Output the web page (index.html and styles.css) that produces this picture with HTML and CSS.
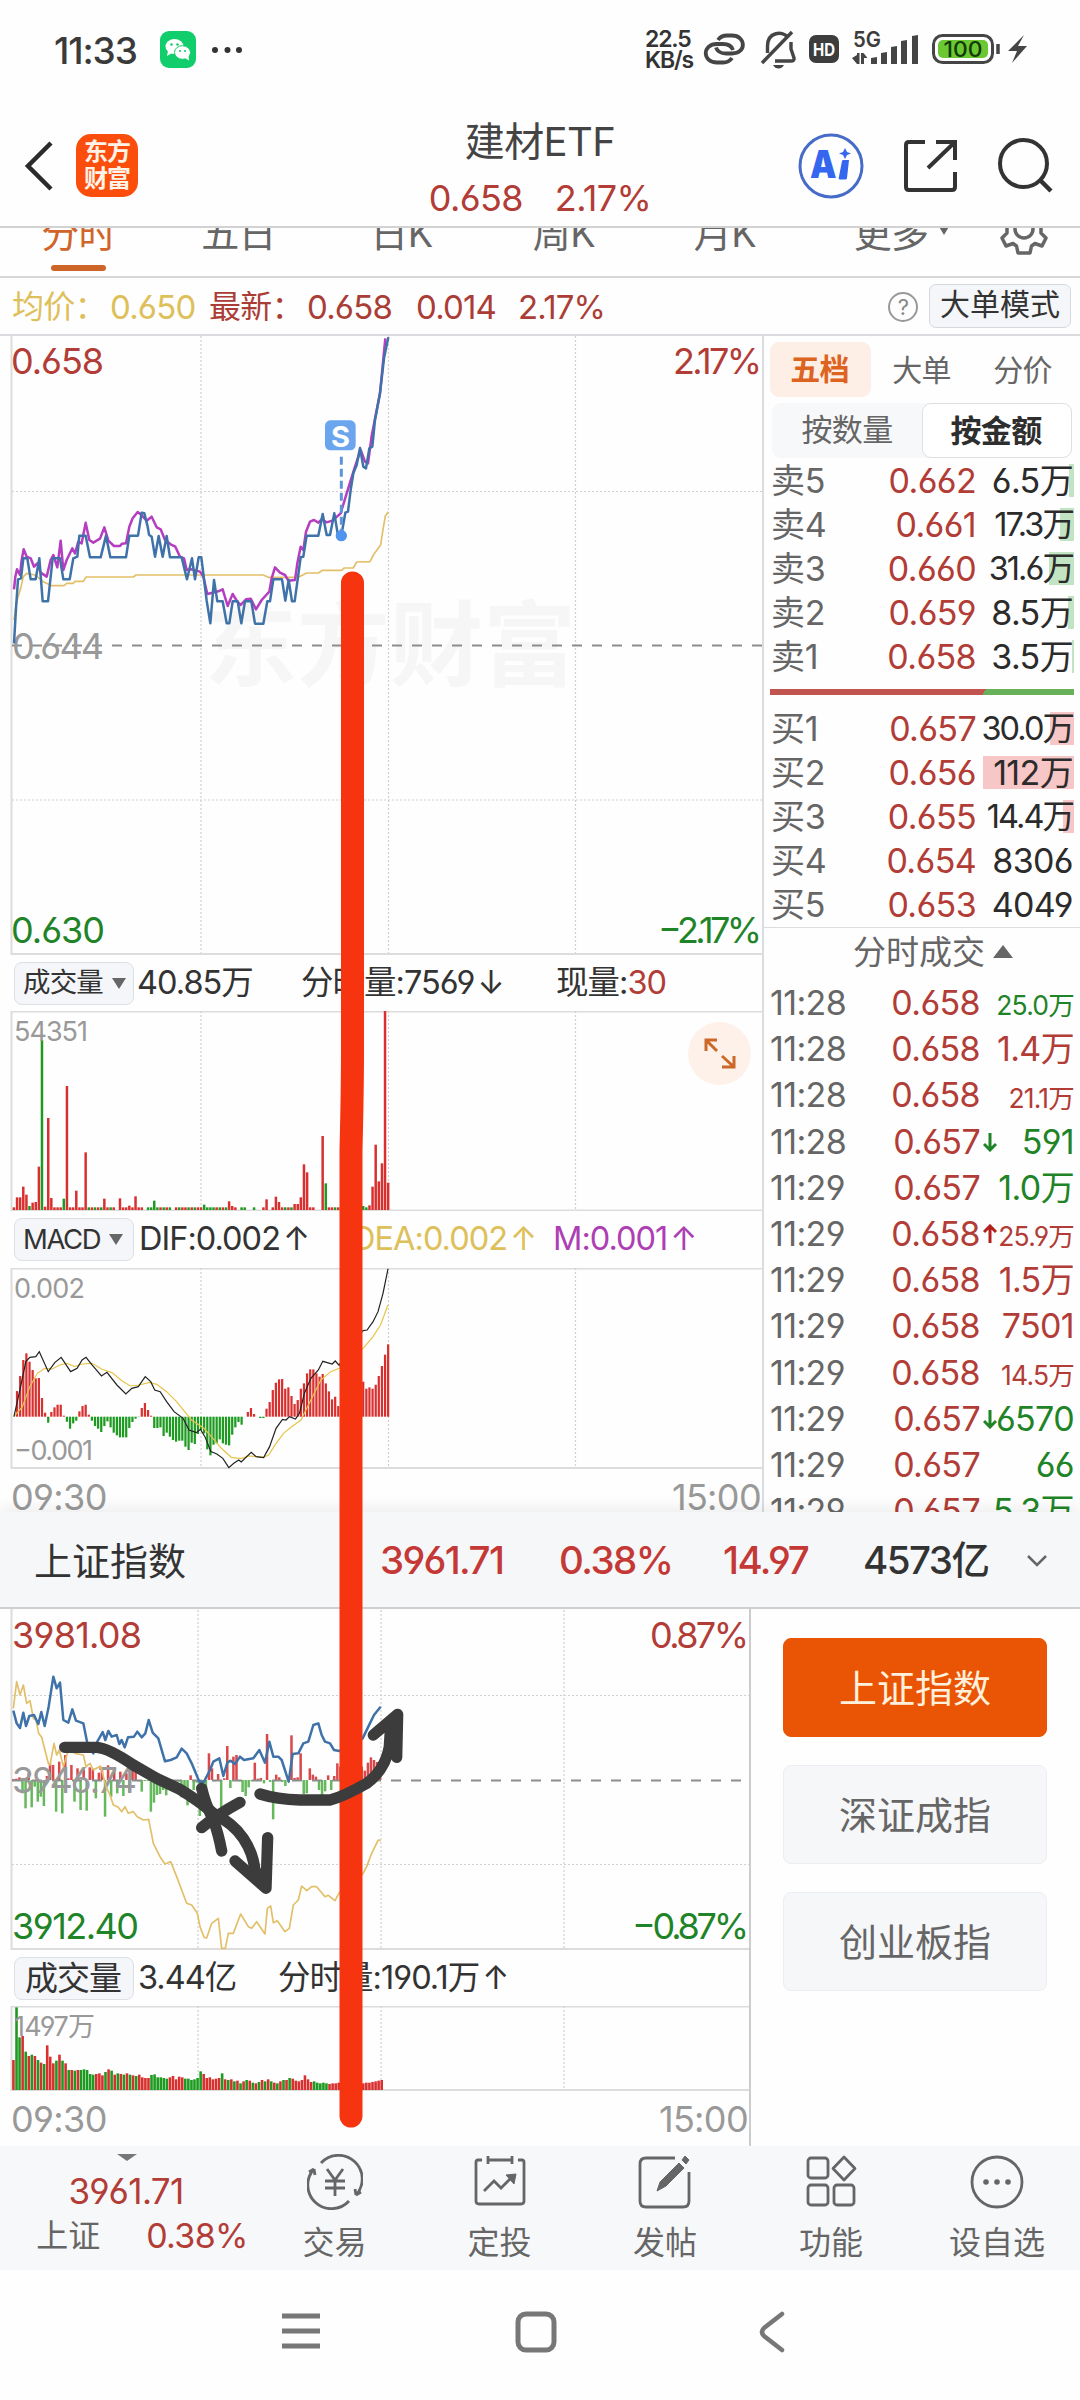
FILE: index.html
```html
<!DOCTYPE html>
<html lang="zh-CN">
<head>
<meta charset="utf-8">
<title>建材ETF</title>
<link rel="stylesheet" href="styles.css">
</head>
<body>
<div class="app">
  <header class="status">
    <span class="clock">11:33</span>
    <svg class="wechat" width="36" height="37" viewBox="0 0 36 37"><rect width="36" height="37" rx="9" fill="#12cd6b"/><ellipse cx="14.500" cy="15.500" rx="9" ry="7.500" fill="#fff"/><path d="M8 20l-1 5 5-3z" fill="#fff"/><ellipse cx="22.500" cy="21.500" rx="8" ry="6.800" fill="#fff" stroke="#12cd6b"/><path d="M25 27l4 2.500-.5-5z" fill="#fff"/><g fill="#12cd6b"><circle cx="11.500" cy="13.500" r="1.300"/><circle cx="17.500" cy="13.500" r="1.300"/><circle cx="20" cy="20" r="1.100"/><circle cx="25" cy="20" r="1.100"/></g></svg>
    <svg class="dots" width="32" height="8" viewBox="0 0 32 8" fill="#333"><circle cx="4" cy="4" r="3"/><circle cx="16.500" cy="4" r="3"/><circle cx="28" cy="4" r="3"/></svg>
    <span class="speed">22.5<br>KB/s</span>
    <svg class="sys" width="380" height="42" viewBox="700 28 380 42" fill="none" stroke="#454545" stroke-width="3.800">
      <path d="M718 40q3-4.500 9-4.500h5c14 0 15 18 0 18h-6q-8 0-10-6M732 58q-3 4.500-9 4.500h-6c-15 0-15-18.500 0-18.500h6q8 0 10 6"/>
      <path d="M767.500 53V46c0-14 15-16 21-8M791 42V49l3 9q.5 3-3 3H775M762 63l30-31" stroke-width="3.400"/><path d="M773 65h11q-2 3.500-5.500 3.500T773 65z" fill="#454545" stroke="none"/>
      <rect x="809" y="35" width="30" height="28" rx="7" fill="#3d3d3d" stroke="none"/>
      <g fill="#454545" stroke="none"><path d="M871 58l6-1v7h-6zM881 53l6-1v12h-6zM891 47l6-1v18h-6zM901 41l6-1v24h-6zM912 36l6-1v29h-6zM852 58l5-3v-2h2.500v11h-2.500zM861 64v-11h2.500l4 5h-3.500v6z"/></g>
      <rect x="933.500" y="35.500" width="59" height="27" rx="9" stroke-width="3"/><rect x="938" y="40" width="50" height="18" rx="5" fill="#6cc832" stroke="none"/><path d="M998 44v10" stroke-width="3.500"/>
      <path d="M1024 35l-16 16h9l-5 12 15-17h-9z" fill="#454545" stroke="none"/>
      <text x="824" y="55.500" class="hd" text-anchor="middle" textLength="22" lengthAdjust="spacingAndGlyphs">HD</text>
      <text x="853" y="47" class="fiveg" textLength="28" lengthAdjust="spacingAndGlyphs">5G</text>
      <text x="963" y="57" class="batt" text-anchor="middle" textLength="39" lengthAdjust="spacingAndGlyphs">100</text>
    </svg>
  </header>

  <div class="head">
    <svg class="back" width="30" height="52" viewBox="0 0 30 52"><path d="M27 3L4 26l23 23" fill="none" stroke="#2b2b2b" stroke-width="4.500"/></svg>
    <div class="logo">东方<br>财富</div>
    <div class="title"><b>建材ETF</b><div class="quote"><span>0.658</span><span>2.17%</span></div></div>
    <svg class="tools" width="256" height="68" viewBox="797 132 256 68" fill="none">
      <circle cx="831" cy="166" r="31" stroke="#466bc8" stroke-width="3"/>
      <g fill="#3566f0"><text x="810" y="178" class="ai" textLength="26" lengthAdjust="spacingAndGlyphs">A</text><path d="M842 161q0-1 1.500-1h5.500l-2 18q0 1.500-2 1.500h-5q-1.500 0-1.300-1.500zM845 148l2 4 4 1.500-4 1.500-2 4-2-4-4-1.500 4-1.500z"/></g>
      <path d="M925 142h-16q-3 0-3 3v42q0 3 3 3h43q3 0 3-3v-15M936 142h19v18M955 142l-27 26" stroke="#333" stroke-width="4"/>
      <circle cx="1023.500" cy="163.500" r="23.500" stroke="#333" stroke-width="4"/><path d="M1040 180l11 11" stroke="#333" stroke-width="4.500"/>
    </svg>
  </div>

  <nav class="tabs">
    <span class="on">分时</span><span>五日</span><span>日K</span><span>周K</span><span>月K</span><span>更多<i></i></span>
    <svg width="50" height="30" viewBox="-25 -1 50 30" fill="none" stroke="#666" stroke-width="3.500"><path d="M-6 24H6L7.500 17 11 14.500 18 17 22 9 17 4V-4L22-9H-22L-17-4V4L-22 9-18 17-11 14.500-7.500 17z" stroke-linejoin="round"/><circle r="9"/></svg>
  </nav>

  <div class="info">
    <span class="avg">均价：</span><span class="avg n">0.650</span><span class="up">最新：</span><span class="up n">0.658</span><span class="up n">0.014</span><span class="up n">2.17%</span>
    <i class="q">?</i><button>大单模式</button>
  </div>

  <main class="main">
    <section class="charts">
      <svg class="plot" width="763" height="619" viewBox="0 336 763 619">
        <text x="204" y="679" class="mark" textLength="372">东方财富</text>
        <path class="grid" d="M201 336V953M388.500 336V953M575.500 336V953M12 491.500H763M12 800H763"/>
        <path class="axis" d="M11.500 336V954H763" />
        <path class="mid" d="M12 645.500H763"/>
        <text x="12" y="659" class="ax gray" textLength="92">0.644</text>
        <g transform="translate(0 330) scale(.33333)" class="ln">
          <polyline class="yel" points="42,870 50,815 62,775 70,740 80,730 105,735 130,755 155,767 192,767 200,760 220,760 225,754 250,754 258,741 400,741 408,735 790,735 805,742 895,742 920,729 955,729 968,721 1025,721 1033,714 1060,714 1070,696 1110,695 1122,672 1142,645 1148,605 1156,558 1165,545"/>
          <polyline class="pur" points="42,778 46,740 51,718 60,735 65,690 71,658 80,680 92,685 102,710 112,700 122,728 140,740 152,690 160,675 172,712 182,632 190,720 200,690 217,655 225,670 235,635 245,640 257,578 268,630 280,638 300,626 313,592 325,632 342,648 360,648 366,641 378,640 388,590 398,565 413,546 425,556 440,572 455,560 470,592 482,598 495,630 512,643 526,650 540,680 552,685 560,720 575,718 600,725 610,740 622,792 655,784 668,778 683,828 698,792 712,815 722,825 738,808 752,806 768,838 785,810 808,785 815,745 825,712 840,728 855,735 865,752 885,750 892,700 902,650 910,660 918,605 930,575 942,570 955,578 965,568 980,577 997,572 1022,550 1040,490 1065,410 1082,360 1095,395 1104,400 1115,318 1140,190 1156,25"/>
          <polyline class="blu" points="42,940 48,835 54,748 63,745 70,685 82,685 92,748 107,748 118,685 128,814 144,814 158,685 180,685 190,748 209,748 220,685 232,680 238,617 257,617 270,682 302,682 318,617 331,682 378,682 388,617 414,617 425,548 433,550 443,590 447,614 455,620 465,680 476,618 488,680 500,618 510,682 545,682 561,748 576,685 585,748 596,682 604,682 620,812 631,880 642,750 652,814 668,814 680,880 688,880 698,814 713,814 724,880 735,814 754,814 765,881 790,881 802,814 810,814 820,748 846,748 856,812 866,750 876,814 884,814 902,682 910,680 920,617 955,617 968,552 980,615 990,615 1003,550 1014,617 1024,617 1036,548 1044,545 1052,480 1060,430 1070,405 1080,354 1090,410 1098,415 1108,355 1117,350 1125,270 1140,190 1152,85 1165,22"/>
          <path d="M1024 380V610" stroke="#5d95d8" stroke-width="9" stroke-dasharray="24 12"/>
          <circle cx="1024" cy="617" r="17" fill="#4f94ef"/><rect x="975" y="271" width="92" height="90" rx="16" fill="#6aa5ee"/>
        </g>
        <text x="340.500" y="447" class="sell" text-anchor="middle">S</text>
        <text x="11" y="374" class="ax red" textLength="93">0.658</text><text x="762" y="374" class="ax red end" textLength="89">2.17%</text>
        <text x="11" y="943" class="ax green" textLength="94">0.630</text><text x="762" y="943" class="ax green end" textLength="104">−2.17%</text>
      </svg>
      <div class="ind i1"><span class="pick">成交量<i></i></span><span>40.85万</span><span>分时量:7569<em>↓</em></span><span>现量:<b>30</b></span></div>
      <svg class="plot" width="763" height="200" viewBox="0 1011 763 200">
        <path class="axis" d="M763 1011.500H11.500V1210.500H763"/><path class="grid" d="M201 1011V1210M388.500 1011V1210M575.500 1011V1210"/>
        <g id="vol" transform="translate(0 1210) scale(.4974 .3333)"></g>
        <text x="14" y="1041" class="sm gray" textLength="74">54351</text>
        <circle cx="719.500" cy="1053.500" r="31.500" fill="#fdf1e9"/>
        <path d="M706 1051V1040H717M706 1040L717 1051M734 1056V1067H722M734 1067L722 1056" fill="none" stroke="#cc6828" stroke-width="3"/>
      </svg>
      <div class="ind i2"><span class="pick">MACD<i></i></span><span>DIF:0.002<em>↑</em></span><span class="avg">DEA:0.002<em>↑</em></span><span class="m">M:0.001<em>↑</em></span></div>
      <svg class="plot" width="763" height="201" viewBox="0 1268 763 201">
        <path class="axis" d="M763 1268.500H11.500V1468H763"/><path class="grid" d="M201 1268V1468M388.500 1268V1468M575.500 1268V1468"/>
        <g id="macd" transform="translate(0 1416.700) scale(.4974 .3333)"></g>
        <text x="14" y="1298" class="sm gray" textLength="71">0.002</text><text x="14" y="1460" class="sm gray" textLength="79">−0.001</text>
        <g transform="translate(0 1220) scale(.4974 .3333)" class="thin">
          <polyline stroke="#e6c548" points="28,590 45,560 60,500 75,460 90,445 105,447 120,435 135,430 150,440 165,432 185,430 205,448 225,458 245,482 262,498 280,495 300,487 315,493 335,515 355,545 385,600 410,625 425,650 445,685 465,712 485,716 500,708 530,712 540,705 555,670 570,640 585,622 605,600 625,540 645,480 665,455 682,445 705,415 730,385 750,350 765,315 780,255"/>
          <polyline stroke="#222" points="28,590 40,510 52,425 60,412 72,410 79,395 97,455 110,428 123,412 142,455 155,445 165,420 173,412 185,435 204,468 215,457 235,495 253,522 265,505 278,500 292,470 303,485 311,510 322,515 335,545 350,575 368,595 380,630 395,638 403,628 412,650 424,695 436,702 448,715 460,743 470,730 480,720 485,726 505,697 515,710 530,713 542,680 555,625 568,598 575,600 582,590 594,597 602,580 612,520 625,475 640,450 649,424 668,432 674,423 682,436 700,380 730,332 738,330 750,305 760,275 770,220 780,147"/>
        </g>
      </svg>
      <div class="time"><span>09:30</span><span>15:00</span></div>
    </section>

    <aside class="book">
      <div class="modes"><b>五档</b><span>大单</span><span>分价</span></div>
      <div class="toggle"><span>按数量</span><b>按金额</b></div>
      <div class="rows" id="sell"></div>
      <div class="ratio"></div>
      <div class="rows" id="buy"></div>
      <h3>分时成交<i></i></h3>
      <div class="trades" id="trades"></div>
    </aside>
  </main>

  <div class="indexbar"><span>上证指数</span><b>3961.71</b><b>0.38%</b><b>14.97</b><b class="dark">4573亿</b><svg width="22" height="14" viewBox="0 0 22 14"><path d="M2 2l9 9 9-9" fill="none" stroke="#666" stroke-width="2.500"/></svg></div>

  <section class="lower">
    <div class="idx">
      <svg class="plot" width="750" height="341" viewBox="0 1609 750 341">
        <path class="grid" d="M198 1610V1949M381 1610V1949M564 1610V1949M12 1695.500H750M12 1864.500H750"/>
        <path class="axis" d="M11.500 1609V1949H750"/>
        <g id="flow" transform="translate(0 1780) scale(.33333)"></g>
        <path class="mid" d="M391 1780.500H745"/><path class="mid" d="M12 1780.500H381" />
        <text x="12" y="1793" class="ax gray" textLength="125">3946.74</text>
        <g transform="translate(0 1600) scale(.33333)" class="ln">
          <polyline class="yel" points="40,325 50,245 60,285 70,255 80,310 90,302 100,355 108,360 116,400 125,412 145,490 150,495 162,430 170,465 178,450 190,500 205,450 225,460 250,465 258,500 270,490 280,510 302,498 318,560 330,585 340,615 355,622 365,635 375,620 385,640 400,635 412,650 430,660 446,658 460,730 480,770 495,792 512,785 530,830 560,910 575,915 592,940 600,980 612,1012 620,1014 635,970 655,955 665,1045 676,1045 685,1000 700,1000 722,942 745,980 755,985 770,965 795,1002 802,925 812,918 820,968 832,962 855,995 868,985 880,915 895,900 905,858 920,872 935,860 950,860 975,890 985,886 1005,902 1018,878 1050,860 1088,822 1100,800 1115,760 1135,720 1142,722"/>
          <polyline class="blu" points="40,332 50,370 60,384 70,338 78,378 88,348 102,345 115,372 124,336 134,378 146,320 160,230 170,265 180,248 190,360 205,368 217,328 228,362 250,370 262,430 280,460 292,425 308,396 316,420 325,393 335,410 350,405 358,432 365,420 374,442 384,412 402,410 412,395 425,412 436,400 446,360 458,398 475,415 495,484 512,480 530,472 545,446 560,460 575,490 598,545 612,545 630,510 640,485 658,475 670,528 682,488 692,482 705,492 720,470 732,480 760,475 778,450 795,488 808,425 820,470 835,470 845,480 866,545 878,462 895,460 910,430 925,425 940,375 955,370 965,405 975,425 990,430 1002,450 1018,453 1050,440 1088,415 1105,380 1122,345 1142,320"/>
        </g>
        <text x="12" y="1648" class="ax red" textLength="130">3981.08</text><text x="749" y="1648" class="ax red end" textLength="99">0.87%</text>
        <text x="12" y="1939" class="ax green" textLength="127">3912.40</text><text x="749" y="1939" class="ax green end" textLength="117">−0.87%</text>
      </svg>
      <div class="ind i3"><span class="pick">成交量</span><span>3.44亿</span><span>分时量:190.1万<em>↑</em></span></div>
      <svg class="plot" width="750" height="85" viewBox="0 2006 750 85">
        <path class="axis" d="M750 2006.500H11.500V2090H750"/><path class="grid" d="M198 2006V2090M381 2006V2090M564 2006V2090"/>
        <g id="ivol" transform="translate(0 2090) scale(.4974 .3333)"></g>
        <text x="14" y="2036" class="sm gray" textLength="81">1497万</text>
      </svg>
      <div class="time"><span>09:30</span><span>15:00</span></div>
    </div>
    <div class="picks"><button class="on">上证指数</button><button>深证成指</button><button>创业板指</button></div>
  </section>

  <footer class="bar">
    <div class="mini"><i></i><b>3961.71</b><div><span>上证</span><b>0.38%</b></div></div>
    <div class="act"><svg viewBox="0 0 56 56"><path d="M14 9a23.500 23.500 0 0 1 35 32M49 41l5-3M49 41l-1-6M42 47a23.500 23.500 0 0 1-35-32M7 15l-5 3M7 15l1 6"/><path d="M20 15l8 11 8-11M18 27h20M18 34h20M28 26v16"/></svg>交易</div>
    <div class="act"><svg viewBox="0 0 56 56"><path d="M10 6H6q-2 0-2 2v39q0 3 3 3h42q3 0 3-3V8q0-2-2-2h-4M16 6h24M16 2v8M40 2v8M12 37l10-10 7 7 11-11"/><path d="M34 21l10-1-2 10z" fill="#666" stroke-width="1"/></svg>定投</div>
    <div class="act"><svg viewBox="0 0 56 56"><path d="M38 4H9q-6 0-6 6v37q0 6 6 6h37q6 0 6-6V18"/><path d="M20 37l3-9L42 9l5 5-18 18zM45 6l3-4 4 4-3 4z" fill="#666" stroke-width="1"/></svg>发帖</div>
    <div class="act"><svg viewBox="0 0 56 56"><rect x="5" y="4" width="20" height="20" rx="3"/><rect x="5" y="31" width="20" height="20" rx="3"/><rect x="31" y="31" width="20" height="20" rx="3"/><path d="M41 3l11 11.500L41 26 30 14.500z" stroke-linejoin="round"/></svg>功能</div>
    <div class="act"><svg viewBox="0 0 56 56"><circle cx="28" cy="28" r="25"/><g fill="#666" stroke="none"><circle cx="17" cy="28" r="2.800"/><circle cx="28" cy="28" r="2.800"/><circle cx="39" cy="28" r="2.800"/></g></svg>设自选</div>
  </footer>
  <div class="sysnav">
    <svg width="40" height="40" viewBox="0 0 40 40" stroke="#777" stroke-width="5"><path d="M1 5h38M1 20h38M1 35h38"/></svg>
    <svg width="42" height="42" viewBox="0 0 42 42" fill="none" stroke="#777" stroke-width="5"><rect x="3" y="3" width="36" height="36" rx="8"/></svg>
    <svg width="28" height="42" viewBox="0 0 28 42" fill="none" stroke="#777" stroke-width="4.500" stroke-linecap="round"><path d="M24 3L6 17q-4 4 0 8l18 14"/></svg>
  </div>

  <svg class="ink" width="1080" height="2400" viewBox="0 0 1080 2400" fill="none" stroke-linecap="round" stroke-linejoin="round">
    <path d="M352.500 583V1050Q352.500 1090 351 1150V2116" stroke="#f63410" stroke-width="23"/>
    <g transform="translate(0 1600) scale(.33333)" stroke="#3c3c3c" stroke-width="34">
      <path d="M194 442L290 442Q325 444 400 495L470 535 540 568Q600 605 640 640 700 670 730 715 760 760 765 812"/>
      <path d="M705 783L798 865 803 713M765 812L798 850M605 565Q615 610 640 660 655 700 665 753M605 683Q650 645 720 607"/>
      <path d="M780 582Q830 598 900 600L990 600Q1030 590 1100 550 1155 510 1168 440L1172 375M1120 405L1193 343 1190 472"/>
    </g>
  </svg>
</div>
<script src="app.js"></script>
</body>
</html>
```
FILE: styles.css
```css
* { box-sizing: border-box; }
body { margin: 0; background: #fff; }
body, button { font-family: Inter, "Noto Sans CJK SC", sans-serif; font-feature-settings: "cv03", "cv04"; }
.app { position: relative; width: 1080px; height: 2400px; overflow: hidden; background: #fefefe; color: #333; white-space: nowrap; letter-spacing: -.04em; line-height: 1; }
.app svg { display: block; flex: none; }
i, em { font-style: normal; }

.status { height: 100px; display: flex; align-items: center; padding-left: 54px; }
.clock { width: 106px; flex: none; font-size: 37px; font-weight: 500; color: #3a3a3a; letter-spacing: -.03em; }
.dots { margin-left: 15px; }
.wechat { margin-top: -2px; }
.speed { margin-left: 402px; width: 55px; flex: none; font-size: 23px; font-weight: 600; line-height: 21px; letter-spacing: -.05em; }
.sys { margin-top: -2px; }
.sys text { stroke: none; letter-spacing: 0; }
.hd { font-size: 18px; font-weight: 700; fill: #fff; }
.fiveg { font-size: 22px; font-weight: 600; fill: #3d3d3d; }
.batt { font-size: 22px; font-weight: 500; fill: #123a08; }

.head { height: 128px; border-bottom: 2px solid #d2d2d2; display: flex; align-items: center; padding: 5px 27px 0 24px; }
.logo { margin-left: 22px; width: 62px; height: 63px; border-radius: 15px; background: #fb4d0b; color: #fff3e8; font-size: 24px; font-weight: 700; line-height: 27px; text-align: center; padding-top: 4px; letter-spacing: -1px; }
.title { flex: 1; text-align: center; padding-left: 145px; color: #444; }
.title b { display: block; font-weight: 400; font-size: 40px; line-height: 56px; margin-top: 8px; }
.quote { display: flex; justify-content: center; gap: 32px; color: #b23c36; font-size: 36px; line-height: 56px; }
.ai { font-size: 38px; font-weight: 900; }

.tabs { height: 50px; border-bottom: 2px solid #d6d6d6; overflow: hidden; display: grid; grid-template-columns: 157px 163px 163px 162px 160px 194px 60px; font-size: 38px; color: #666; }
.tabs span { height: 48px; line-height: 48px; margin-top: -19px; text-align: center; }
.tabs .on { color: #d0642a; height: 67px; }
.tabs .on::after { content: ""; display: block; width: 55px; height: 6px; margin: 8px auto 0; border-radius: 3px; background: #cd6428; }
.tabs i { display: inline-block; vertical-align: 12px; margin-left: 10px; border: 6px solid transparent; border-top: 10px solid #666; border-bottom: 0; }

.info { height: 58px; border-bottom: 2px solid #d9dbdf; display: flex; align-items: center; padding: 2px 9px 0 12px; font-size: 32px; letter-spacing: -.02em; }
.info .n { letter-spacing: -.025em; font-size: 33px; }
.info .avg:first-child { width: 98px; }
.info .avg.n { width: 99px; }
.info .up:nth-child(3) { width: 98px; }
.info .up:nth-child(4) { width: 109px; }
.info .up:nth-child(5) { width: 102px; }
.avg { color: #ddc05a; }
.up { color: #ab3d37; }
.q { margin-left: auto; width: 30px; height: 30px; border: 2px solid #999; border-radius: 50%; font-size: 22px; color: #888; text-align: center; line-height: 26px; }
.info button { margin: -3px 0 0 11px; width: 142px; height: 44px; border: 1px solid #d5d8de; border-radius: 7px; background: #f5f6f9; color: #333; font-size: 30px; line-height: 38px; padding: 0 0 3px; }

.main { display: flex; height: 1176px; overflow: hidden; }
.charts { width: 764px; border-right: 2px solid #d9dce0; }
.plot text { letter-spacing: 0; }
.grid { stroke: #d0d0d0; stroke-width: 1.200; stroke-dasharray: 2 2; fill: none; }
.axis { stroke: #dcdcdc; stroke-width: 2; fill: none; }
.mid { stroke: #8c8c8c; stroke-width: 1.800; stroke-dasharray: 10 10; }
.ln { fill: none; stroke-linejoin: round; }
.yel { stroke: #e2bf68; stroke-width: 5; }
.pur { stroke: #b53dc0; stroke-width: 7.500; }
.blu { stroke: #3f72a8; stroke-width: 7.500; }
.thin polyline { fill: none; stroke-width: 1.200; vector-effect: non-scaling-stroke; }
.mark { font-size: 93px; font-weight: 700; fill: #f6f6f6; }
.sell { font-size: 29px; font-weight: 700; fill: #fff; }
.ax { font-size: 36px; }
.sm { font-size: 27px; }
.end { text-anchor: end; }
.red { fill: #b23c36; }
.green { fill: #1f8427; }
.gray { fill: #999; }
.ind { height: 56px; display: grid; align-items: center; padding-left: 14px; font-size: 32.500px; letter-spacing: -.03em; }
.i1 { grid-template-columns: 123px 164px 255px auto; }
.i2 { height: 57px; grid-template-columns: 125px 213px 201px auto; }
.i3 { grid-template-columns: 124px 140px auto; }
.ind b { font-weight: 400; color: #b23c36; }
.ind em { display: inline-block; margin-left: 3px; letter-spacing: 0; }
.ind .m { color: #ad3eb4; }
.pick { width: 120px; height: 43px; border: 1px solid #dcdfe4; border-radius: 8px; background: #f5f6f9; display: flex; align-items: center; gap: 9px; padding-left: 8px; font-size: 27.500px; letter-spacing: -.03em; }
.i2 .pick { letter-spacing: -.05em; }
.i3 .pick { font-size: 33px; padding-left: 10px; }
.pick i { border: 7px solid transparent; border-top: 11px solid #666; border-bottom: 0; }
.time { height: 45px; display: flex; justify-content: space-between; align-items: center; padding: 10px 1px 0 11px; font-size: 36px; color: #999; }

.book { width: 316px; padding: 6px 6px 0; }
.modes { height: 55px; display: grid; grid-template-columns: 101px 101px 101px; align-items: center; text-align: center; font-size: 30px; color: #666; }
.modes b { height: 55px; line-height: 55px; border-radius: 9px; background: #fdeee6; color: #dd6320; }
.modes b, .toggle b { padding-right: 2px; }
.toggle { height: 55px; margin: 6px 2px 0; display: grid; grid-template-columns: 1fr 1fr; border-radius: 9px; background: #f7f8fa; font-size: 31px; line-height: 53px; text-align: center; color: #666; }
.toggle b { border: 1px solid #dedfe2; border-radius: 9px; background: #fff; color: #2e2e2e; }
.rows { font-size: 34px; }
.row { height: 44px; display: grid; grid-template-columns: 88px 118px 97px; align-items: center; position: relative; }
.row .name { padding-left: 1px; letter-spacing: -.01em; color: #666; }
.row .price { color: #b23c36; text-align: right; }
.row .amount { color: #2b2b2b; text-align: right; position: relative; }
.row .tight { font-size: 32.500px; letter-spacing: -.06em; }
.row i { position: absolute; right: 0; top: 5px; height: 33px; background: #c2e4c2; }
#buy .row i { background: #f7c6c6; }
#sell { padding-top: 1px; }
.ratio { height: 6px; margin: 10px 0 12px; background: linear-gradient(120deg, #c25450 0 70.200%, #68b05a 70.200%); }
.book h3 { margin: 0 -6px; height: 53px; border-top: 1px solid #ddd; font-weight: 400; font-size: 33px; line-height: 49px; color: #666; text-align: center; padding-left: 22px; letter-spacing: 0; }
.book h3 i { display: inline-block; margin-left: 8px; vertical-align: 6px; border: 10px solid transparent; border-bottom: 13px solid #666; border-top: 0; }
.trade { height: 46.200px; display: grid; grid-template-columns: 90px 120px 18px 76px; align-items: center; font-size: 34px; color: #666; }
.trade span:nth-child(2) { color: #b23c36; text-align: right; }
.trade svg { margin-left: 3px; }
.trade span:last-child { display: flex; justify-content: flex-end; }
.trade .u { color: #b23c36; }
.trade .d { color: #1f8427; }
.trade .small { font-size: 26.500px; padding-top: 5px; letter-spacing: -.03em; }

.indexbar { height: 97px; background: #f6f7f9; border-bottom: 2px solid #cfcfcf; display: grid; grid-template-columns: 346px 179px 164px 140px 163px 22px; align-items: center; padding: 2px 0 0 34px; font-size: 38px; color: #333; letter-spacing: 0; box-shadow: 0 -6px 12px rgba(0,0,0,.06); position: relative; }
.indexbar b { font-size: 38.500px; font-weight: 550; color: #c43936; letter-spacing: -.04em; }
.indexbar .dark { color: #333; }
.lower { display: flex; height: 537px; }
.idx { width: 751px; border-right: 2px solid #ccc; overflow: hidden; }
.picks { padding: 29px 0 0 32px; display: flex; flex-direction: column; gap: 28px; }
.picks button { width: 264px; height: 99px; border: 1px solid #eceef1; border-radius: 8px; background: #f6f7f9; color: #666; font-size: 38px; padding: 0 0 5px; }
.picks .on { background: #e95504; border-color: #e95504; color: #fff0dc; }

.bar { height: 124px; background: #f7f8fa; display: grid; grid-template-columns: 252px 165px 165px 166px 166px 166px; color: #666; }
.mini { position: relative; display: flex; flex-direction: column; align-items: center; font-size: 34px; padding-top: 27px; gap: 9px; }
.mini i { position: absolute; left: 117px; top: 8px; border: 10px solid transparent; border-top: 7px solid #777; border-bottom: 0; }
.mini b { font-weight: 400; color: #b23c36; line-height: 36px; }
.mini > b { font-size: 35px; }
.mini div { display: flex; gap: 46px; align-items: center; padding-left: 32px; }
.mini span { font-size: 32px; letter-spacing: 0; }
.act { text-align: center; font-size: 32px; letter-spacing: 0; padding-top: 8px; line-height: 65px; }
.act svg { width: 56px; height: 56px; margin: 0 auto; fill: none; stroke: #666; stroke-width: 2.800; }
.sysnav { height: 130px; display: flex; padding: 41px 0 0 281px; }
.sysnav svg:nth-child(2) { margin-left: 194px; }
.sysnav svg:nth-child(3) { margin-left: 201px; }
.ink { position: absolute; left: 0; top: 0; pointer-events: none; }
```
FILE: app.js
```javascript
const RED = '#d8302f', GREEN = '#1d9a20';

function bars(id, values, x0, step, width, colour) {
  document.getElementById(id).innerHTML = values.map((v, i) => {
    if (!v) return '';
    const h = Math.abs(v);
    const y = v < 0 && id !== 'vol' && id !== 'ivol' ? 0 : -h;
    return `<rect x="${(x0 + step * i - width / 2).toFixed(1)}" y="${y}" width="${width}" height="${h}" fill="${colour(v, i)}"/>`;
  }).join('');
}
const sign = v => (v < 0 ? GREEN : RED);

// Minute volumes; a negative value is a falling minute.
bars('vol', [8,38,38,70,46,-12,22,24,130,-510,10,276,36,8,8,8,-34,372,8,8,58,8,8,173,-8,8,-8,8,-8,34,8,-8,8,0,35,8,8,13,8,41,8,8,0,-8,-8,-28,-8,8,-8,8,-8,0,8,-8,8,8,-8,8,-8,8,8,-16,-8,-8,-8,8,-8,8,-8,26,12,8,0,-8,-8,0,0,-8,0,0,8,32,0,8,40,24,8,-8,8,-8,18,18,38,137,113,8,8,0,0,222,-80,8,8,-8,8,8,-8,8,8,8,8,8,-12,-8,14,70,196,86,140,597,82], 28, 6.27, 5, sign);

bars('macd', [0,77,122,170,190,165,140,115,116,56,12,-18,14,28,36,36,3,-15,-36,-20,-12,16,32,36,6,-12,-28,-36,-46,-28,-14,-32,-48,-56,-62,-62,-62,-34,-16,-6,-1,26,41,20,3,-34,-34,-32,-58,-48,-60,-70,-75,-72,-72,-90,-100,-78,-82,-52,-40,-50,-98,-116,-84,-80,-68,-80,-84,-86,-54,-32,-16,-24,0,14,26,8,0,-4,-4,24,44,80,102,112,113,84,88,62,38,50,84,100,130,142,142,130,120,128,100,76,52,60,32,40,60,70,80,90,100,110,105,84,88,84,96,122,152,186,217], 28, 6.27, 4.5, sign);

bars('flow', [3,4,8,-40,-85,20,-82,-20,-65,-50,-78,12,50,45,-95,55,-100,75,5,45,-65,35,-90,32,-92,38,34,-55,22,36,-110,44,-50,36,-40,25,-48,20,-38,34,26,-4,-35,-3,-3,-95,-68,-45,-42,-30,-46,-4,-20,-28,-5,-52,-30,-76,14,-30,-8,-108,-4,-30,80,35,-4,18,-82,5,102,-24,70,75,-4,-36,-48,-22,-4,52,4,6,-10,138,-6,-118,16,8,-6,-18,6,134,6,8,80,-42,-40,35,16,10,-30,-45,-34,14,-30,12,50,40,60,50,30,40,50,30,40,28,52,68,60,54,50], 40, 9.17, 7.5, v => (v < 0 ? '#66b85c' : '#d9484a'));

const iv = [90,248,158,162,115,102,106,102,90,82,78,134,100,80,88,106,88,80,60,60,58,60,60,62,60,48,46,48,50,44,54,62,58,46,50,48,46,50,46,44,42,46,38,36,36,45,47,38,38,36,34,38,42,32,40,38,34,34,30,32,36,56,48,36,38,32,34,36,50,32,30,32,26,28,20,26,30,28,22,20,24,30,26,32,26,22,20,26,30,30,36,34,28,26,30,44,32,24,26,22,20,22,20,18,20,20,22,24,22,20,22,20,22,24,20,22,22,24,26,28,30];
const rising = [11,12,13,27,28,29,42,43,44,51,52,53,54,62,63,64,65,66,91,92,93,94,95,96];
const falling = i => i === 1 || i === 61 || (i > 22 && i < 27) || (i > 44 && i < 51) || (i > 55 && i < 61) || (i > 97 && i < 103) || (i < 98 && i > 1 && i % 2 === 0 && !rising.includes(i));
bars('ivol', iv, 27, 6.17, 5.2, (v, i) => (falling(i) ? GREEN : RED));

const level = ([name, price, amount, width, tight]) =>
  `<div class="row"><i style="width:${width}px"></i><span class="name">${name}</span><span class="price">${price}</span><span class="amount${tight ? ' tight' : ''}">${amount}</span></div>`;
document.getElementById('sell').innerHTML = [
  ['卖5', '0.662', '6.5万', 5], ['卖4', '0.661', '17.3万', 14, 1], ['卖3', '0.660', '31.6万', 25, 1], ['卖2', '0.659', '8.5万', 6], ['卖1', '0.658', '3.5万', 2]
].map(level).join('');
document.getElementById('buy').innerHTML = [
  ['买1', '0.657', '30.0万', 24, 1], ['买2', '0.656', '112万', 91], ['买3', '0.655', '14.4万', 11, 1], ['买4', '0.654', '8306', 0], ['买5', '0.653', '4049', 0]
].map(level).join('');

const arrow = { u: '<path d="M7 19V2M1 8l6-6 6 6" stroke="#b3201c"/>', d: '<path d="M7 1v17M1 12l6 6 6-6" stroke="#1f8427"/>' };
document.getElementById('trades').innerHTML = [
  ['11:28', '0.658', '25.0万', 'd', '', 1], ['11:28', '0.658', '1.4万', 'u'], ['11:28', '0.658', '21.1万', 'u', '', 1],
  ['11:28', '0.657', '591', 'd', 'd'], ['11:29', '0.657', '1.0万', 'd'], ['11:29', '0.658', '25.9万', 'u', 'u', 1],
  ['11:29', '0.658', '1.5万', 'u'], ['11:29', '0.658', '7501', 'u'], ['11:29', '0.658', '14.5万', 'u', '', 1],
  ['11:29', '0.657', '6570', 'd', 'd'], ['11:29', '0.657', '66', 'd'], ['11:29', '0.657', '5.3万', 'd']
].map(([t, p, v, c, a, s]) => `<div class="trade"><span>${t}</span><span>${p}</span><svg width="14" height="20" viewBox="0 0 14 20" fill="none" stroke-width="3">${arrow[a] || ''}</svg><span class="${c}${s ? ' small' : ''}">${v}</span></div>`).join('');
```
